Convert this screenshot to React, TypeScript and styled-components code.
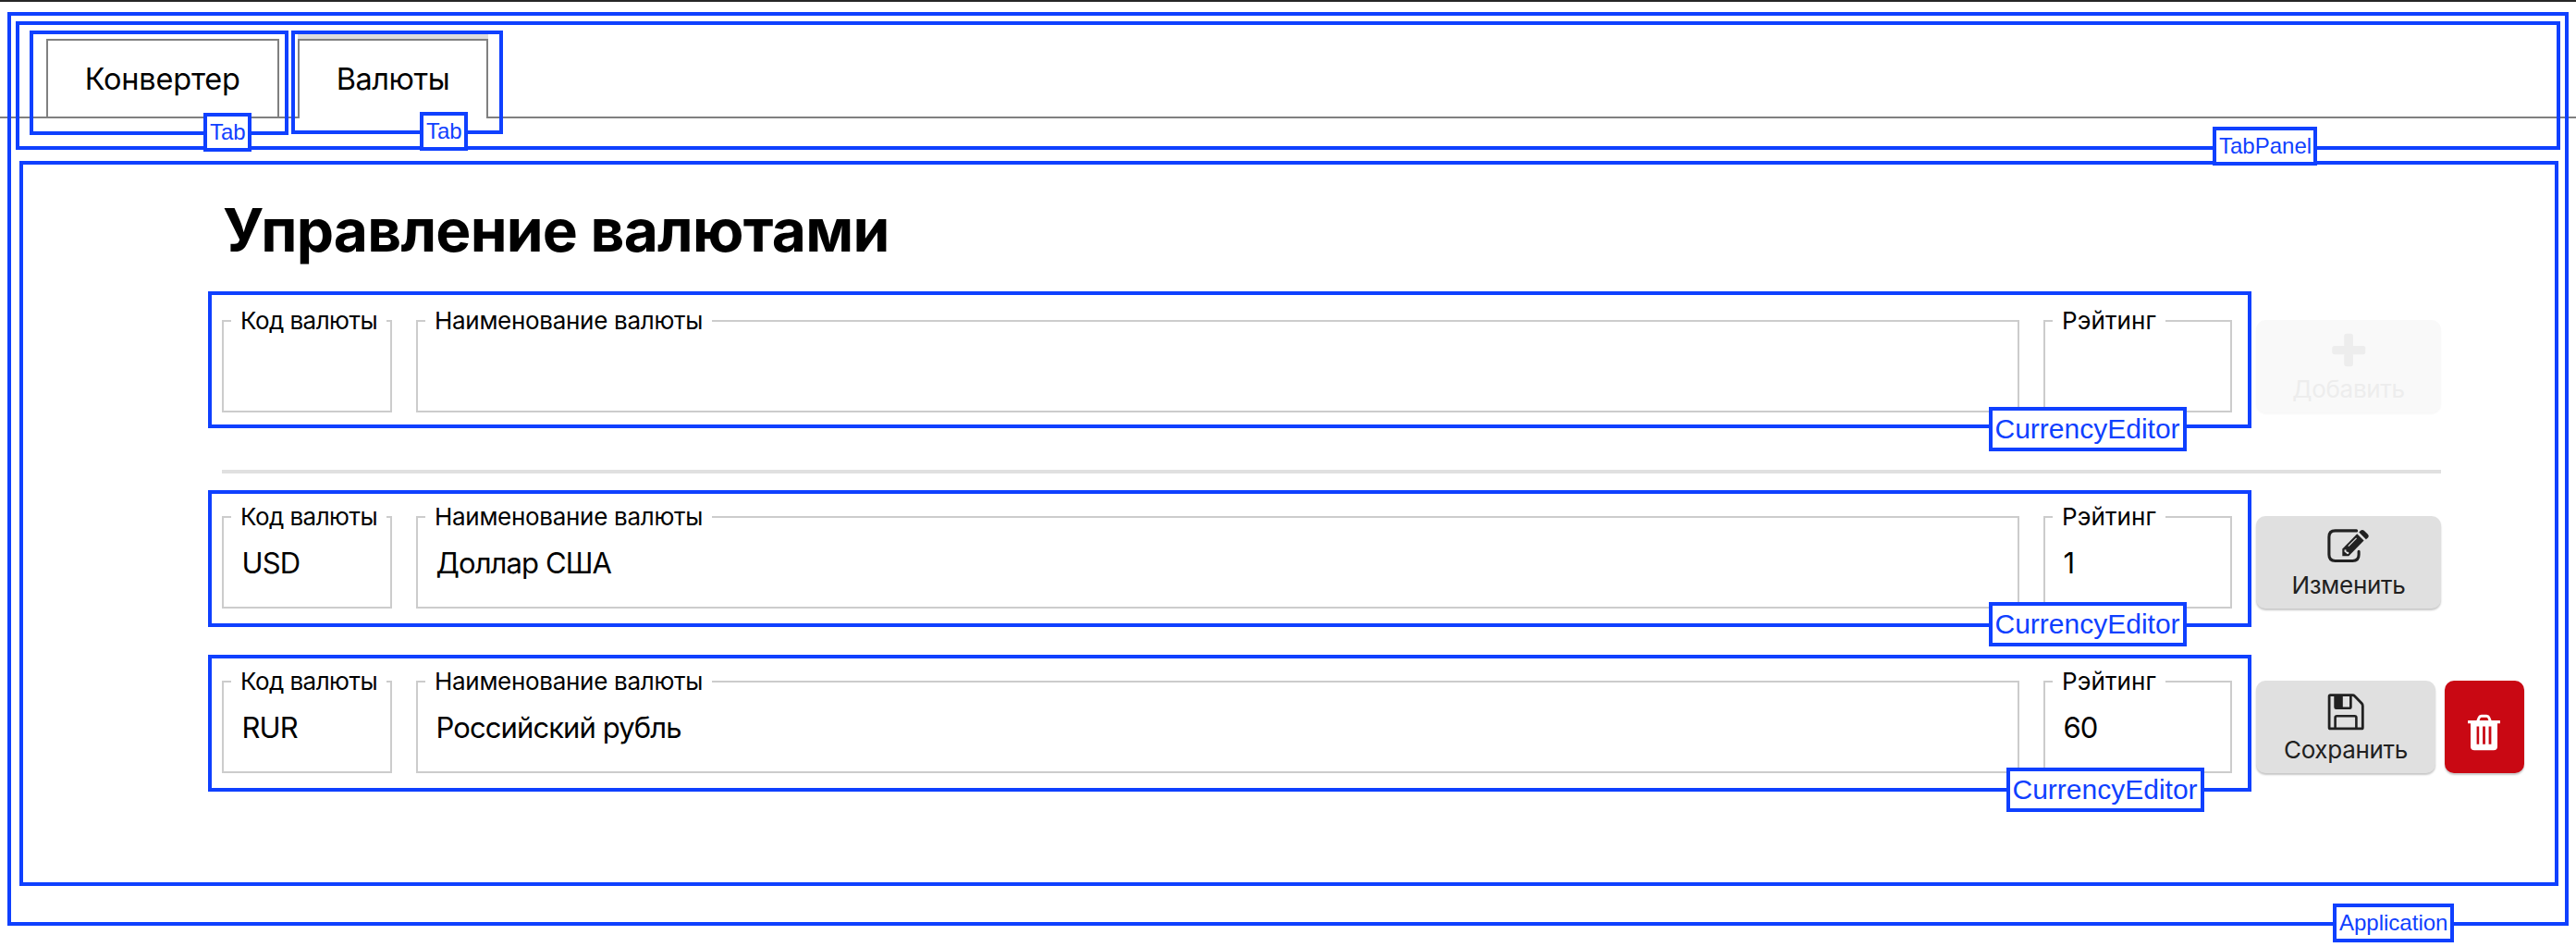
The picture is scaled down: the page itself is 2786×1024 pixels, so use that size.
import React from 'react';
import styled, { createGlobalStyle } from 'styled-components';

const BLUE = '#0f40ff';

const GlobalStyle = createGlobalStyle`
  * { box-sizing: border-box; }
  body { margin: 0; background: #fff; }
`;

const Page = styled.div`
  position: relative;
  display: flex;
  flex-direction: column;
  width: 2786px;
  height: 1024px;
  overflow: hidden;
  background: #fff;
  color: #000;
  font-family: Inter, "Noto Sans", sans-serif;
`;

const TopEdge = styled.div`
  flex: none;
  height: 2px;
  background: #262626;
`;

/* Component outlines that lie over the page */
const Frame = styled.div<{ $inset: string }>`
  position: absolute;
  inset: ${(p) => p.$inset};
  border: 4px solid ${BLUE};
  pointer-events: none;
`;

const FrameLabel = styled.span<{ $right: number; $bottom: number; $width: number; $large?: boolean }>`
  position: absolute;
  z-index: 2;
  right: ${(p) => p.$right}px;
  bottom: ${(p) => p.$bottom}px;
  width: ${(p) => p.$width}px;
  height: ${(p) => (p.$large ? 48 : 42)}px;
  padding-left: ${(p) => (p.$large ? 2.5 : 3)}px;
  border: 4px solid ${BLUE};
  background: #fff;
  color: ${BLUE};
  font-family: "Liberation Sans", sans-serif;
  font-size: ${(p) => (p.$large ? 30 : 24)}px;
  font-weight: 400;
  line-height: ${(p) => (p.$large ? 40 : 34)}px;
  letter-spacing: 0;
  white-space: nowrap;
`;

type OutlineProps = {
  name?: string;
  inset: string;
  right?: number;
  bottom?: number;
  width?: number;
  large?: boolean;
};

function Outline({ name, inset, right = 0, bottom = 0, width = 0, large }: OutlineProps) {
  return (
    <Frame $inset={inset}>
      {name && (
        <FrameLabel $right={right} $bottom={bottom} $width={width} $large={large}>
          {name}
        </FrameLabel>
      )}
    </Frame>
  );
}

const TabBar = styled.nav`
  position: relative;
  flex: none;
  display: flex;
  align-items: flex-end;
  gap: 20px;
  height: 126px;
  padding-left: 50px;
  border-bottom: 2px solid #808080;
`;

const Tab = styled.div<{ $active?: boolean; $width: number; $tracking: number }>`
  position: relative;
  width: ${(p) => p.$width}px;
  height: 86px;
  margin-bottom: -2px;
  padding-left: 39.7px;
  border: 2px solid #808080;
  border-bottom: ${(p) => (p.$active ? 'none' : '2px solid #808080')};
  box-shadow: ${(p) => (p.$active ? '0 -5px 0 #ddd' : 'none')};
  background: #fff;
  font-size: 32.5px;
  line-height: 84px;
  letter-spacing: ${(p) => p.$tracking}px;
  white-space: nowrap;
`;

const Content = styled.main`
  position: relative;
  flex: 1;
  padding: 81px 0 0 240px;
`;

const Title = styled.h1`
  margin: 0 0 42px 1px;
  font-size: 64px;
  font-weight: 700;
  line-height: 80px;
  letter-spacing: -0.76px;
  white-space: nowrap;
`;

const Row = styled.div`
  display: flex;
  align-items: flex-end;
  gap: 26px;
  height: 115px;
  & + & { margin-top: 63px; }
`;

const Divider = styled.hr`
  width: 2400px;
  height: 4px;
  margin: 62px 0 31px;
  border: 0;
  background: #e0e0e0;
`;

const Editor = styled.div`
  position: relative;
  display: grid;
  grid-template-columns: 184px 1734px 204px;
  gap: 26px;
  height: 115px;
`;

const Field = styled.fieldset`
  min-width: 0;
  height: 115px;
  margin: 0;
  padding: 14px 0 0;
  border: 2px solid #ccc;
`;

const Legend = styled.legend<{ $tracking: number }>`
  margin-left: 8px;
  padding: 0 10px;
  font-size: 26px;
  line-height: 32px;
  letter-spacing: ${(p) => p.$tracking}px;
  white-space: nowrap;
`;

const Value = styled.div`
  padding-left: 19.5px;
  font-size: 31px;
  line-height: 40px;
  letter-spacing: -0.9px;
  white-space: nowrap;
`;

const Actions = styled.div`
  display: flex;
  gap: 10px;
`;

const Button = styled.button<{ $width: number; $kind?: 'danger' | 'disabled' }>`
  display: flex;
  flex-direction: column;
  align-items: center;
  width: ${(p) => p.$width}px;
  height: 100px;
  margin: 0;
  padding: ${(p) => (p.$kind === 'danger' ? 32 : 8)}px 0 0;
  border: 0;
  border-radius: 10px;
  background: ${(p) => (p.$kind === 'danger' ? '#c90813' : p.$kind === 'disabled' ? '#f9f9f9' : '#e0e0e0')};
  box-shadow: 0 2px 2px ${(p) => (p.$kind === 'disabled' ? 'rgba(0,0,0,0.03)' : 'rgba(0,0,0,0.22)')};
  color: ${(p) => (p.$kind === 'danger' ? '#fff' : p.$kind === 'disabled' ? '#ededed' : '#212121')};
  font-family: inherit;
`;

const ButtonText = styled.span`
  font-size: 26px;
  line-height: 37px;
  letter-spacing: -0.3px;
`;

const Icon = styled.svg.attrs({ viewBox: '0 0 48 48', fill: 'currentColor' })`
  display: block;
  flex: none;
  width: 48px;
  height: 48px;
`;

const PlusIcon = () => (
  <Icon>
    <rect x="19.3" y="6.8" width="9.6" height="35.4" rx="2.6" />
    <rect x="6.3" y="20" width="36" height="9.2" rx="2.6" />
  </Icon>
);

const EditIcon = () => (
  <Icon>
    <path
      d="M32.6 7.9H9.6Q2.9 7.9 2.9 14.6V33.8Q2.9 40.5 9.6 40.5H28.4Q35.1 40.5 35.1 33.8V30.4"
      fill="none"
      stroke="currentColor"
      strokeWidth="3.1"
      strokeLinecap="round"
    />
    <path d="M17.3 27.6 33.2 11.2 40.6 18.6 24.2 35.2H17.3Z" />
    <path d="M35.3 9.4 37.3 7.5Q39 6.2 40.8 7.7L44.9 11.8Q46.6 13.5 45.2 15.3L42.9 17.3Z" />
    <path d="M23.8 24.6 32.6 15.8" stroke="#e0e0e0" strokeWidth="1.2" />
    <path d="M19.5 28.4 21.3 28.2 21.7 30.4 24.2 31 24.2 32.8 22.8 33.3 19.5 30.4Z" fill="#e0e0e0" />
  </Icon>
);

const SaveIcon = () => (
  <Icon>
    <path
      d="M7.3 7.7H31.2Q32.7 7.7 33.7 8.7L41 16.3Q42.3 17.6 42.3 19.2V42.7Q42.3 43.9 41.1 43.9H7.3Q6.1 43.9 6.1 42.7V8.9Q6.1 7.7 7.3 7.7Z"
      fill="none"
      stroke="currentColor"
      strokeWidth="2.8"
      strokeLinejoin="round"
    />
    <path
      fillRule="evenodd"
      d="M11.3 7.5H30.7V20.8Q30.7 23 28.5 23H13.5Q11.3 23 11.3 20.8ZM20.8 9.1V20.5H28V9.1Z"
    />
    <path
      d="M12.6 43V32Q12.6 30.2 14.4 30.2H33.6Q35.4 30.2 35.4 32V43"
      fill="none"
      stroke="currentColor"
      strokeWidth="2.6"
    />
  </Icon>
);

const TrashIcon = () => (
  <Icon>
    <path d="M16.6 12 18.3 7.8Q18.9 6.2 20.7 6.2H26.3Q28.1 6.2 28.7 7.8L30.4 12" fill="none" stroke="currentColor" strokeWidth="3" />
    <rect x="6" y="11" width="35" height="3.3" rx="0.5" />
    <path
      fillRule="evenodd"
      d="M9 13.5H38V39.2Q38 43.3 33.9 43.3H13.1Q9 43.3 9 39.2ZM15.6 17.4V36.8H18.2V17.4ZM22.1 17.4V36.8H24.9V17.4ZM28.6 17.4V36.8H31.4V17.4Z"
    />
  </Icon>
);

type EditorProps = {
  code?: string;
  title?: string;
  rating?: string;
  outline: Omit<OutlineProps, 'name' | 'width' | 'large'>;
};

function CurrencyEditor({ code, title, rating, outline }: EditorProps) {
  return (
    <Editor>
      <Field>
        <Legend $tracking={-0.55}>Код валюты</Legend>
        <Value>{code}</Value>
      </Field>
      <Field>
        <Legend $tracking={-0.3}>Наименование валюты</Legend>
        <Value>{title}</Value>
      </Field>
      <Field>
        <Legend $tracking={0.1}>Рэйтинг</Legend>
        <Value>{rating}</Value>
      </Field>
      <Outline name="CurrencyEditor" width={214} large {...outline} />
    </Editor>
  );
}

export default function App() {
  return (
    <Page>
      <GlobalStyle />
      <TopEdge />
      <TabBar>
        <Tab $width={252} $tracking={-0.2}>
          Конвертер
          <Outline name="Tab" inset="-11px -12px -20px -20px" right={36} bottom={-22} width={52} />
        </Tab>
        <Tab $active $width={206} $tracking={-0.45}>
          Валюты
          <Outline name="Tab" inset="-11px -18px -17px -9px" right={34} bottom={-22} width={52} />
        </Tab>
        <Outline name="TabPanel" inset="21px 17px -36px 17px" right={259} bottom={-21} width={113} />
      </TabBar>
      <Content>
        <Title>Управление валютами</Title>
        <Row>
          <CurrencyEditor outline={{ inset: '-16px -21px -17px -15px', right: 66, bottom: -29 }} />
          <Button $width={200} $kind="disabled" disabled>
            <PlusIcon />
            <ButtonText>Добавить</ButtonText>
          </Button>
        </Row>
        <Divider />
        <Row>
          <CurrencyEditor
            code="USD"
            title="Доллар США"
            rating="1"
            outline={{ inset: '-13px -21px -20px -15px', right: 66, bottom: -25 }}
          />
          <Button $width={200}>
            <EditIcon />
            <ButtonText>Изменить</ButtonText>
          </Button>
        </Row>
        <Row>
          <CurrencyEditor
            code="RUR"
            title="Российский рубль"
            rating="60"
            outline={{ inset: '-13px -21px -20px -15px', right: 47, bottom: -26 }}
          />
          <Actions>
            <Button $width={194}>
              <SaveIcon />
              <ButtonText>Сохранить</ButtonText>
            </Button>
            <Button $width={86} $kind="danger" aria-label="Удалить">
              <TrashIcon />
            </Button>
          </Actions>
        </Row>
        <Outline inset="46px 19px 66px 21px" />
      </Content>
      <Outline name="Application" inset="13px 8px 23px 8px" right={120} bottom={-22} width={131} />
    </Page>
  );
}
